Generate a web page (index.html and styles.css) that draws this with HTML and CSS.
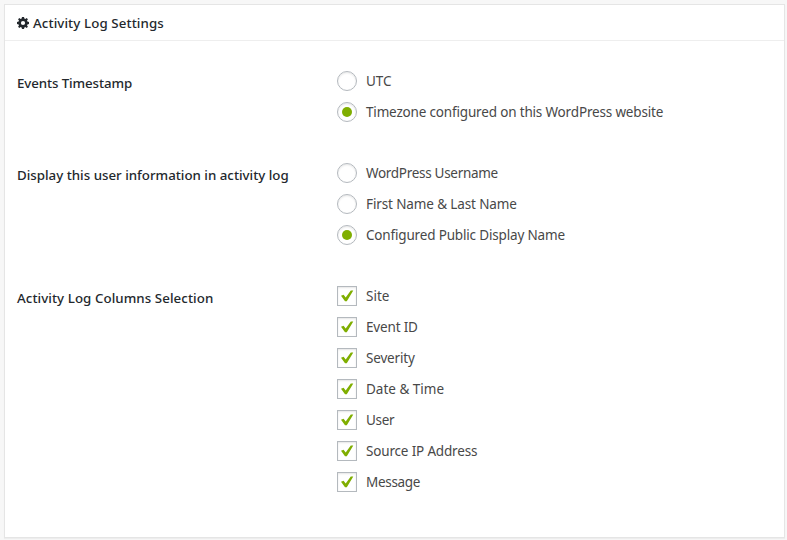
FILE: index.html
```
<!DOCTYPE html>
<html lang="en">
<head>
<meta charset="utf-8">
<title>Activity Log Settings</title>
<link rel="stylesheet" href="styles.css">
</head>
<body>
<svg width="0" height="0" class="defs">
  <symbol id="check" viewBox="0 0 18 18"><path d="M3 8.8 5.6 7.7 7.7 10.4 12.8 3.4 15.3 3.4 8.8 14.2 7 14.2Z"/></symbol>
</svg>
<section class="panel">
  <h2 class="panel-title">
    <svg class="gear" viewBox="0 0 12 12"><path fill-rule="evenodd" d="M5 0H7L7.4 1.6 8.3 2 9.7 1.1 10.9 2.3 10 3.7 10.4 4.6 12 5V7L10.4 7.4 10 8.3 10.9 9.7 9.7 10.9 8.3 10 7.4 10.4 7 12H5L4.6 10.4 3.7 10 2.3 10.9 1.1 9.7 2 8.3 1.6 7.4 0 7V5L1.6 4.6 2 3.7 1.1 2.3 2.3 1.1 3.7 2 4.6 1.6ZM6 3.9A2.1 2.1 0 1 0 6 8.1 2.1 2.1 0 1 0 6 3.9Z"/></svg>
    <span class="title-text">Activity Log Settings</span>
  </h2>
  <div class="settings">
    <div class="setting">
      <h3 class="heading time">Events Timestamp</h3>
      <div class="options">
        <label class="option"><span class="radio"></span><span class="text loose">UTC</span></label>
        <label class="option"><span class="radio on"></span><span class="text">Timezone configured on this WordPress website</span></label>
      </div>
    </div>
    <div class="setting">
      <h3 class="heading">Display this user information in activity log</h3>
      <div class="options">
        <label class="option"><span class="radio"></span><span class="text tight">WordPress Username</span></label>
        <label class="option"><span class="radio"></span><span class="text name">First Name &amp; Last Name</span></label>
        <label class="option"><span class="radio on"></span><span class="text">Configured Public Display Name</span></label>
      </div>
    </div>
    <div class="setting">
      <h3 class="heading columns">Activity Log Columns Selection</h3>
      <div class="options">
        <label class="option"><span class="box"><svg><use href="#check"/></svg></span><span class="text loose">Site</span></label>
        <label class="option"><span class="box"><svg><use href="#check"/></svg></span><span class="text">Event ID</span></label>
        <label class="option"><span class="box"><svg><use href="#check"/></svg></span><span class="text">Severity</span></label>
        <label class="option"><span class="box"><svg><use href="#check"/></svg></span><span class="text loose">Date &amp; Time</span></label>
        <label class="option"><span class="box"><svg><use href="#check"/></svg></span><span class="text tight">User</span></label>
        <label class="option"><span class="box"><svg><use href="#check"/></svg></span><span class="text">Source IP Address</span></label>
        <label class="option"><span class="box"><svg><use href="#check"/></svg></span><span class="text tight">Message</span></label>
      </div>
    </div>
  </div>
</section>
</body>
</html>
```
FILE: styles.css
```
* { box-sizing: border-box; }
body {
  margin: 0;
  padding: 4px 2px 2px 4px;
  height: 540px;
  overflow: hidden;
  background: #f7f7f7;
  font: 14px/20px "Noto Sans", "Open Sans", sans-serif;
  color: #484848;
}
.defs { display: none; }
.panel {
  height: 534px;
  background: #fff;
  border: 1px solid #e5e5e5;
  box-shadow: 0 1px 1px rgba(0, 0, 0, .04);
}
.panel-title {
  display: flex;
  align-items: center;
  gap: 4px;
  height: 36px;
  margin: 0;
  padding-left: 12px;
  border-bottom: 1px solid #eee;
  font-size: 13.3px;
  font-weight: 500;
  letter-spacing: .1px;
  color: #23282d;
}
.gear { width: 12px; height: 12px; fill: #23282d; }
.settings {
  display: flex;
  flex-direction: column;
  gap: 41px;
  padding: 30px 12px 0;
}
.setting { display: grid; grid-template-columns: 320px 1fr; }
.heading {
  margin: 0;
  padding-top: 2px;
  font-size: 13.3px;
  font-weight: 500;
  color: #23282d;
  white-space: nowrap;
}
.heading.time { letter-spacing: -.1px; }
.heading.columns { letter-spacing: .07px; }
.options { display: flex; flex-direction: column; gap: 11px; }
.option { display: flex; gap: 9px; height: 20px; }
.text { white-space: nowrap; font-size: 13.5px; letter-spacing: -.17px; }
.text.tight { letter-spacing: -.3px; }
.text.name { letter-spacing: -.12px; }
.text.loose { letter-spacing: 0; }
.radio, .box {
  display: flex;
  align-items: center;
  justify-content: center;
  width: 20px;
  height: 20px;
  border: 1px solid #b4b9be;
  background: #fff;
  box-shadow: inset 0 1px 2px rgba(0, 0, 0, .1);
}
.radio { border-radius: 50%; }
.radio.on::before {
  content: "";
  width: 10px;
  height: 10px;
  border-radius: 50%;
  background: #7fae00;
}
.box svg { width: 18px; height: 18px; fill: #7fae00; }
```
